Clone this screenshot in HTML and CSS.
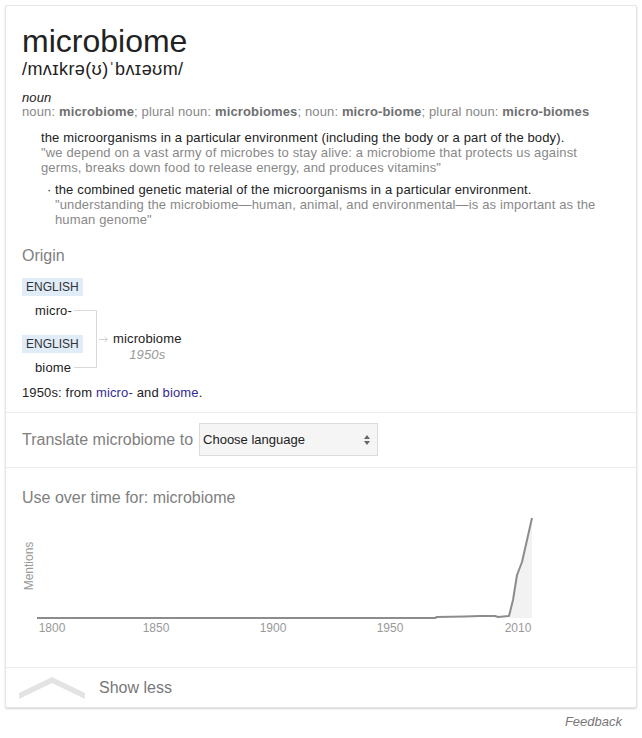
FILE: index.html
```html
<!DOCTYPE html>
<html lang="en">
<head>
<meta charset="utf-8">
<title>microbiome</title>
<link rel="stylesheet" href="styles.css">
</head>
<body>
<div class="card">
  <section class="sec sec-def">
    <h1 class="word">microbiome</h1>
    <div class="pron">/mʌɪkrə(ʊ)ˈbʌɪəʊm/</div>
    <div class="pos">noun</div>
    <div class="forms">noun: <b>microbiome</b>; plural noun: <b>microbiomes</b>; noun: <b>micro-biome</b>; plural noun: <b>micro-biomes</b></div>
    <div class="sense">
      <div class="gloss">the microorganisms in a particular environment (including the body or a part of the body).</div>
      <div class="ex">"we depend on a vast army of microbes to stay alive: a microbiome that protects us against germs, breaks down food to release energy, and produces vitamins"</div>
    </div>
    <div class="sense sub">
      <span class="bullet">·</span>
      <div class="sub-body">
        <div class="gloss">the combined genetic material of the microorganisms in a particular environment.</div>
        <div class="ex">"understanding the microbiome—human, animal, and environmental—is as important as the human genome"</div>
      </div>
    </div>
    <div class="h2 origin">Origin</div>
    <div class="etym">
      <div class="roots">
        <div class="root"><span class="lang">ENGLISH</span><span class="rw">micro-</span></div>
        <div class="root"><span class="lang">ENGLISH</span><span class="rw">biome</span></div>
      </div>
      <svg class="bracket" width="36" height="99" viewBox="0 0 36 99">
        <path d="M0 32.5H22.5V89.5H0" fill="none" stroke="#d9d9d9" stroke-width="1"/>
        <path d="M25 61.5H33" stroke="#cfcfcf" stroke-width="1"/>
        <path d="M30.5 59L33.5 61.5L30.5 64" fill="none" stroke="#cfcfcf" stroke-width="1"/>
      </svg>
      <div class="result">
        <div class="res-word">microbiome</div>
        <div class="yr">1950s</div>
      </div>
    </div>
    <div class="etym-text">1950s: from <a href="#">micro-</a> and <a href="#">biome</a>.</div>
  </section>

  <section class="sec sec-tr">
    <span class="h2">Translate microbiome to</span>
    <div class="select">
      <span>Choose language</span>
      <svg width="8" height="12" viewBox="0 0 8 12"><path d="M4 1L7 5H1Z M4 11L7 7H1Z" fill="#666"/></svg>
    </div>
  </section>

  <section class="sec sec-chart">
    <div class="h2">Use over time for: microbiome</div>
    <svg class="chart" width="520" height="135" viewBox="0 0 520 135">
      <path d="M487 106L491 90L495 65L500 52L505 30L510 8V108H487Z" fill="#f2f2f2"/>
      <path d="M15 108H413L415 107L443 106.5L458 106L473 106L476 107L487 106L491 90L495 65L500 52L505 30L510 8" fill="none" stroke="#8c8c8c" stroke-width="2" stroke-linejoin="round"/>
      <text class="axis-title" transform="translate(11 56) rotate(-90)" text-anchor="middle">Mentions</text>
      <text class="tick" x="30" y="122" text-anchor="middle">1800</text>
      <text class="tick" x="134" y="122" text-anchor="middle">1850</text>
      <text class="tick" x="251" y="122" text-anchor="middle">1900</text>
      <text class="tick" x="368" y="122" text-anchor="middle">1950</text>
      <text class="tick" x="496" y="122" text-anchor="middle">2010</text>
    </svg>
  </section>

  <div class="more">
    <svg class="chev" width="66" height="26" viewBox="0 0 66 26"><path d="M0 18L33 2L66 18V24L33 8L0 24Z" fill="#e3e3e3"/></svg>
    <span class="more-text">Show less</span>
  </div>
</div>
<div class="feedback">Feedback</div>
</body>
</html>
```

FILE: styles.css
```css
* { box-sizing: border-box; }
html, body { margin: 0; padding: 0; background: #fff; }
body {
  font-family: "Liberation Sans", Arial, sans-serif;
  font-size: 13px;
  color: #222;
}
.card {
  margin: 5px 5px 0 5px;
  width: 632px;
  border: 1px solid #e6e6e6;
  border-radius: 2px;
  box-shadow: 0 1px 2px rgba(0,0,0,0.18);
  background: #fff;
}
.sec { border-bottom: 1px solid #ebebeb; }
.sec-def { padding: 17px 30px 11px 16px; letter-spacing: 0.14px; }
.word {
  margin: 0;
  font-weight: normal;
  font-size: 32px;
  line-height: 36px;
  letter-spacing: 0;
  color: #222;
}
.pron { font-size: 18px; line-height: 20px; letter-spacing: 0.4px; color: #222; }
.pos { margin-top: 12px; font-style: italic; line-height: 14px; color: #222; }
.forms { line-height: 14px; color: #878787; }
.forms b { color: #6f6f6f; }
.sense { margin-left: 19px; margin-top: 11px; line-height: 15px; }
.sense.sub { margin-top: 7px; display: flex; margin-left: 19px; }
.bullet { width: 14px; flex: none; padding-left: 6px; color: #222; }
.gloss { color: #222; }
.ex { color: #888; }
.h2 { font-size: 16px; line-height: 20px; letter-spacing: 0; color: #808080; }
.origin { margin-top: 19px; }
.etym { display: flex; align-items: flex-start; margin-top: 12px; }
.roots { width: 62px; flex: none; display: flex; flex-direction: column; }
.root { display: flex; flex-direction: column; align-items: flex-start; }
.root + .root { margin-top: 15px; }
.lang {
  display: block;
  padding: 0 4px;
  line-height: 18px;
  font-size: 12px;
  letter-spacing: 0;
  background: #e0ecf8;
  color: #333;
}
.rw { margin-left: 13px; margin-top: 6px; line-height: 18px; color: #222; }
.bracket { display: block; flex: none; margin-left: -10px; }
.result { margin-left: 3px; margin-top: 53px; text-align: center; line-height: 16px; }
.res-word { color: #222; }
.yr { font-style: italic; color: #999; }
.etym-text { margin-top: 8px; line-height: 16px; color: #222; }
.etym-text a { color: #352a91; text-decoration: none; }

.sec-tr {
  display: flex;
  align-items: center;
  padding: 10px 16px 11px 16px;
}
.select {
  margin-left: 6px;
  width: 179px;
  height: 33px;
  border: 1px solid #dcdcdc;
  background: #f5f5f5;
  display: flex;
  align-items: center;
  justify-content: space-between;
  padding: 0 6px 0 3px;
  color: #222;
}
.select svg { display: block; }

.sec-chart { padding: 20px 16px 22px 16px; }
.chart { display: block; margin-top: 2px; }
.axis-title { font-size: 12px; fill: #999; font-family: "Liberation Sans", Arial, sans-serif; }
.tick { font-size: 12px; fill: #999; font-family: "Liberation Sans", Arial, sans-serif; }

.more {
  display: flex;
  align-items: center;
  height: 39px;
  padding-left: 13px;
}
.chev { display: block; flex: none; }
.more-text { margin-left: 14px; font-size: 16px; color: #777; }

.feedback {
  width: 622px;
  margin-top: 6px;
  text-align: right;
  font-style: italic;
  font-size: 13px;
  line-height: 16px;
  color: #777;
}
```
